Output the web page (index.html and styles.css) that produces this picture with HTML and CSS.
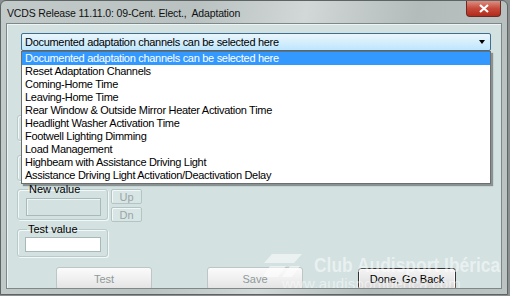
FILE: index.html
```html
<!DOCTYPE html>
<html lang="en">
<head>
    <meta charset="UTF-8">
    <title>VCDS Release 11.11.0: 09-Cent. Elect., Adaptation</title>
    <link rel="stylesheet" href="styles.css">
</head>
<body>
    <div class="window">
        <div class="titlebar">
            <span class="title">VCDS Release 11.11.0: 09-Cent. Elect.,&nbsp; Adaptation</span>
            <div class="close">
                <svg width="12" height="9" viewBox="0 0 12 9"><path d="M2 1 L10 8 M10 1 L2 8" stroke="#fff" stroke-width="2.2"/></svg>
            </div>
        </div>
        <div class="client">
            <div class="combo-wrap">
                <div class="combo">
                    <span>Documented adaptation channels can be selected here</span>
                    <span class="arrow"></span>
                </div>
                <ul class="dropdown">
                    <li class="selected">Documented adaptation channels can be selected here</li>
                    <li>Reset Adaptation Channels</li>
                    <li>Coming-Home Time</li>
                    <li>Leaving-Home Time</li>
                    <li>Rear Window &amp; Outside Mirror Heater Activation Time</li>
                    <li>Headlight Washer Activation Time</li>
                    <li>Footwell Lighting Dimming</li>
                    <li>Load Management</li>
                    <li>Highbeam with Assistance Driving Light</li>
                    <li>Assistance Driving Light Activation/Deactivation Delay</li>
                </ul>
            </div>

            <!-- group boxes hidden behind the open list -->
            <div class="hidden-groups">
                <div class="group ghost"></div>
                <div class="group ghost"></div>
            </div>

            <div class="value-row">
                <fieldset class="group">
                    <legend>New value</legend>
                    <div class="field disabled"></div>
                </fieldset>
                <div class="updn">
                    <button class="small" disabled>Up</button>
                    <button class="small" disabled>Dn</button>
                </div>
            </div>
            <fieldset class="group test-group">
                <legend>Test value</legend>
                <div class="field"></div>
            </fieldset>

            <div class="actions">
                <button class="btn" disabled>Test</button>
                <button class="btn" disabled>Save</button>
                <button class="btn default">Done, Go Back</button>
            </div>

            <div class="watermark">
                <svg class="wm-logo" width="40" height="24" viewBox="0 0 40 24">
                    <path d="M8 0 L38 0 L30 9 L0 9 Z" fill="#fff"/>
                    <path d="M6 12 L22 12 L14 23 L-2 23 Z" fill="#fff"/>
                    <path d="M26 12 L36 12 L28 23 L18 23 Z" fill="#fff"/>
                </svg>
                <div class="wm-name">Club Audisport Ibérica</div>
                <div class="wm-url">www.audisportiberica.com</div>
            </div>
        </div>
    </div>
</body>
</html>
```

FILE: styles.css
```css
body {
    margin: 0;
    background-color: #8a8f8f;
    font-family: "Liberation Sans", Arial, sans-serif;
    color: #000;
}
.window {
    width: 508px;
    height: 295px;
    background: linear-gradient(100deg, #c3caca 0%, #b9c1c1 35%, #d2d7d7 55%, #b3bbbb 75%, #bcc3c3 100%);
    border: 1px solid #5e6464;
    border-radius: 6px 6px 0 0;
    display: flex;
    flex-direction: column;
    padding: 0 5px 5px 5px;
    box-sizing: border-box;
}
.titlebar {
    height: 22px;
    display: flex;
    align-items: flex-start;
    justify-content: space-between;
    flex-shrink: 0;
}
.title {
    font-size: 10.5px;
    letter-spacing: -0.15px;
    margin-top: 6px;
    margin-left: 1px;
    color: #111;
}
.close {
    width: 35px;
    height: 16px;
    margin-right: 1px;
    border: 1px solid #6b2a22;
    border-top: none;
    border-radius: 0 0 4px 4px;
    background: linear-gradient(#dc8f82, #c7493a 50%, #b02c1c);
    display: flex;
    align-items: center;
    justify-content: center;
    box-sizing: border-box;
}
.client {
    position: relative;
    flex: 1;
    background-color: #d3e1e1;
    border: 1px solid #7e8888;
    box-shadow: inset 1px 1px 0 #eef4f4;
    padding: 9px 11px 0 14px;
    overflow: hidden;
}
.combo-wrap {
    position: relative;
    width: 470px;
}
.combo {
    height: 18px;
    border: 1px solid #3c6f91;
    border-radius: 2px;
    background: linear-gradient(#eaf6fd, #d7effc 45%, #bee6fd);
    display: flex;
    align-items: center;
    justify-content: space-between;
    padding: 0 5px 0 3px;
    font-size: 11px;
    letter-spacing: -0.3px;
    box-sizing: border-box;
}
.arrow {
    width: 0;
    height: 0;
    border-left: 3.5px solid transparent;
    border-right: 3.5px solid transparent;
    border-top: 4px solid #000;
}
.dropdown {
    position: absolute;
    top: 18px;
    left: 0;
    width: 470px;
    margin: 0;
    padding: 0 0 1px 0;
    list-style: none;
    background-color: #fff;
    border: 1px solid #6e6e6e;
    box-shadow: 2px 2px 1px rgba(0, 0, 0, 0.35);
    box-sizing: border-box;
    z-index: 2;
}
.dropdown li {
    height: 13px;
    line-height: 13px;
    font-size: 11px;
    letter-spacing: -0.3px;
    padding-left: 3px;
    white-space: nowrap;
}
.dropdown li.selected {
    background-color: #3399ff;
    color: #fff;
}
.hidden-groups {
    display: flex;
    flex-direction: column;
    gap: 14px;
    margin: 64px 0 0 -4px;
    width: 90px;
}
.group {
    border: 1px solid #b9caca;
    box-shadow: 1px 1px 0 #f2f8f8, inset 1px 1px 0 #f2f8f8;
    border-radius: 3px;
    margin: 0;
    min-width: 0;
    box-sizing: border-box;
}
.ghost {
    height: 26px;
}
legend {
    font-size: 11px;
    padding: 0 1px;
    margin-left: 2px;
}
.value-row {
    display: flex;
    align-items: flex-start;
    gap: 3px;
    margin: 8px 0 0 -4px;
}
.value-row .group {
    width: 91px;
    height: 37px;
    padding: 3px 0 0 8px;
    margin-top: -6px;
}
.field {
    width: 76px;
    height: 15px;
    background-color: #fff;
    border: 1px solid #a8b8b8;
    box-sizing: border-box;
}
.field.disabled {
    width: 75px;
    height: 18px;
    background-color: #d3e1e1;
    border: 1px solid #a9b9b9;
    box-shadow: inset 1px 1px 0 #eef5f5;
}
.updn {
    display: flex;
    flex-direction: column;
    gap: 3px;
}
.small {
    width: 31px;
    height: 15px;
    padding: 0;
    font-family: inherit;
    font-size: 11px;
    color: #9aa4a4;
    background-color: #d8e5e5;
    border: 1px solid #b4c4c4;
    box-shadow: inset 1px 1px 0 #f2f8f8;
    border-radius: 2px;
}
.test-group {
    width: 91px;
    height: 34px;
    margin: 1px 0 0 -4px;
    padding: 2px 0 0 7px;
}
.actions {
    display: flex;
    margin: 10px 0 0 35px;
}
.btn {
    width: 96px;
    height: 23px;
    padding: 0;
    font-family: inherit;
    font-size: 11px;
    color: #8f9999;
    background: linear-gradient(#fbfbfb, #f0f0f0 50%, #e3e3e3);
    border: 1px solid #bcc6c6;
    border-radius: 3px;
    margin-right: 55px;
}
.btn.default {
    width: 98px;
    height: 22px;
    margin-top: 1px;
    margin-right: 0;
    color: #000;
    border: 1px solid #333;
    background: linear-gradient(#f4f4f4, #e8e8e8 50%, #d6d6d6);
    box-shadow: inset 0 0 0 1px #fafafa;
}
.watermark {
    position: absolute;
    left: 257px;
    top: 228px;
    width: 250px;
    height: 42px;
    color: rgba(255, 255, 255, 0.5);
    pointer-events: none;
}
.wm-logo {
    position: absolute;
    left: 0;
    top: 2px;
    opacity: 0.55;
}
.wm-name {
    position: absolute;
    left: 50px;
    top: 1px;
    font-size: 21px;
    font-weight: bold;
    white-space: nowrap;
    transform: scaleX(0.83);
    transform-origin: left;
}
.wm-url {
    position: absolute;
    left: 18px;
    top: 23px;
    font-size: 15px;
    white-space: nowrap;
    letter-spacing: 0.2px;
}
```
